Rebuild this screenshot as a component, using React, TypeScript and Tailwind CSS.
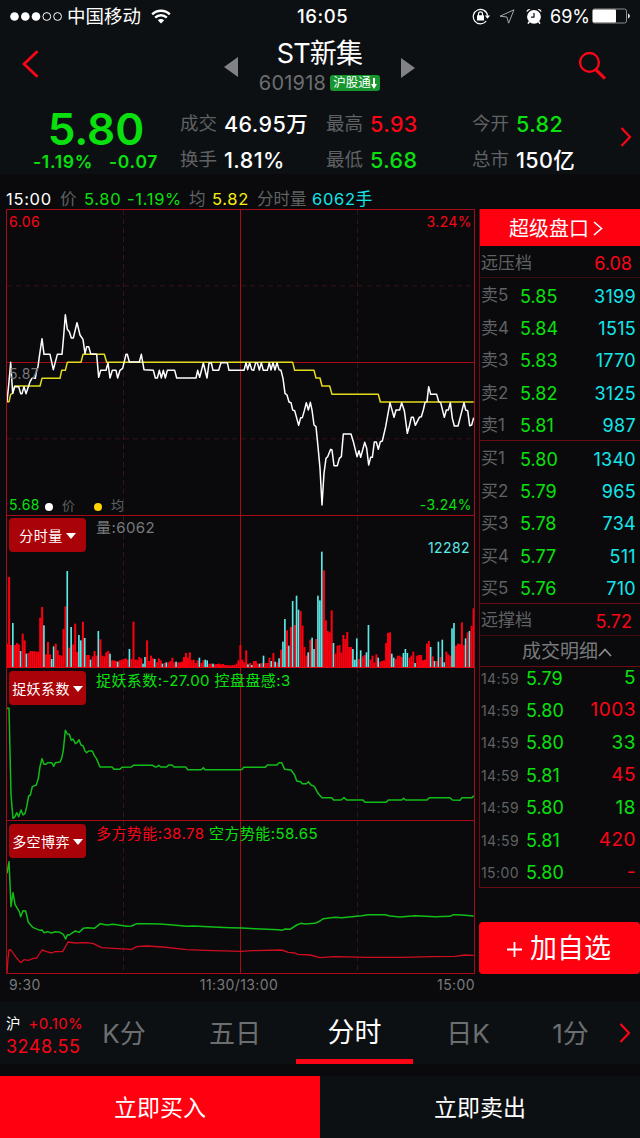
import React from 'react';

interface Stat {
  label: string;
  value: string;
  color: string;
}

interface Level {
  label: string;
  price: string;
  volume: string;
}

interface Trade {
  time: string;
  price: string;
  volume: string;
  color: string;
}

const GREEN = 'text-[#0be00f]';
const RED = 'text-[#fb0516]';

const stats: Stat[] = [
  { label: '成交', value: '46.95万', color: 'text-white' },
  { label: '最高', value: '5.93', color: RED },
  { label: '今开', value: '5.82', color: GREEN },
  { label: '换手', value: '1.81%', color: 'text-white' },
  { label: '最低', value: '5.68', color: GREEN },
  { label: '总市', value: '150亿', color: 'text-white' },
];

const sells: Level[] = [
  { label: '卖5', price: '5.85', volume: '3199' },
  { label: '卖4', price: '5.84', volume: '1515' },
  { label: '卖3', price: '5.83', volume: '1770' },
  { label: '卖2', price: '5.82', volume: '3125' },
  { label: '卖1', price: '5.81', volume: '987' },
];

const buys: Level[] = [
  { label: '买1', price: '5.80', volume: '1340' },
  { label: '买2', price: '5.79', volume: '965' },
  { label: '买3', price: '5.78', volume: '734' },
  { label: '买4', price: '5.77', volume: '511' },
  { label: '买5', price: '5.76', volume: '710' },
];

const trades: Trade[] = [
  { time: '14:59', price: '5.79', volume: '5', color: GREEN },
  { time: '14:59', price: '5.80', volume: '1003', color: RED },
  { time: '14:59', price: '5.80', volume: '33', color: GREEN },
  { time: '14:59', price: '5.81', volume: '45', color: RED },
  { time: '14:59', price: '5.80', volume: '18', color: GREEN },
  { time: '14:59', price: '5.81', volume: '420', color: RED },
  { time: '15:00', price: '5.80', volume: '-', color: RED },
];

// One bar per minute. Negative values are drawn in cyan, positive in red.
const volumes = [
  70, 270, 66, -132, 66, 72, 68, -48, 100, 80, -40, 42, 48, 48, 47, 46, 46, 148, 180, -125,
  38, 75, 38, -24, -62, 70, 50, 36, 34, 114, 182, -288, 58, -120, 68, 130, 45, -96, -80, 136,
  -87, 36, 36, -22, 32, 48, 34, -108, 83, 34, 32, 44, 48, -40, 20, 20, 18, -16, 20, 22,
  24, 26, 22, -54, 24, 136, 22, 22, 30, 26, -10, -30, 80, 18, 34, 26, -24, 14, 26, 20,
  -10, 12, -14, 14, 18, 28, 14, -16, 14, 14, 16, 30, 42, 28, 44, 20, 22, 12, 20, -28,
  12, 20, -22, -20, 10, 10, -10, 8, 9, 10, 8, 9, 6, 6, 5, 5, 6, 6, 10, 20,
  66, 22, 14, 50, -8, 12, -6, 18, 18, 10, -10, 12, -34, 12, 12, 28, -18, 42, -16, 14,
  -26, 52, -76, -144, 110, -64, 120, -198, 126, -214, -172, 168, 124, 60, 34, -44, 82, -88, -54, 84,
  -214, -200, -346, 290, 140, 108, 104, 170, -72, 40, 64, 66, 44, 96, 84, 105, 60, 60, -54, -22,
  -86, 24, -50, 32, 36, -44, -126, 22, 34, 14, 38, -28, 16, 18, 20, 72, 102, 104, -40, -28,
  24, 34, 34, 30, -42, -54, -42, 28, 34, 46, -12, 34, 36, 36, 20, 22, 70, 78, -60, 32,
  -18, 18, -76, 30, -82, -14, 46, 38, 34, -116, -132, 64, 70, 68, 134, 66, -86, 104, -108, 124,
  176,
];

// Each series is split in two: morning and afternoon session
const price = [
  '21,665 27,605 32,547 38,640 44,620 56,620 62,641 66,641 72,620 78,641 90,605 96,595 106,595 110,571 114,560 118,530 126,476 132,523 150,523 160,569 172,523 186,523 190,480 196,404 202,448 208,455 214,474 220,474 231,428 240,465 249,478 255,521 260,500 266,500 272,521 290,523 296,592 302,571 318,571 324,549 330,594 337,571 348,571 353,594 360,571 368,565 378,523 382,523 388,546 418,546 424,523 432,569 460,571 466,594 472,594 478,571 484,594 490,571 496,594 502,571 524,571 530,594 588,594 593,571 599,592 610,549 621,594 627,549 634,549 639,571 656,571 663,548 682,548 687,571 729,571',
  '24,571 27,571 33,548 38,569 44,548 50,569 56,571 62,548 67,548 73,570 79,548 85,571 97,571 103,548 108,570 114,548 120,570 126,548 132,569 138,571 144,595 150,640 156,645 162,666 168,668 173,690 179,692 191,736 197,713 202,713 208,692 214,668 220,690 226,667 231,690 237,735 243,740 249,800 255,865 261,975 267,880 273,835 278,830 287,808 291,810 297,857 307,857 313,835 319,830 325,762 348,762 355,785 366,830 372,812 377,832 389,787 395,805 401,855 407,832 412,832 418,786 424,786 430,808 436,785 442,783 452,740 465,668 477,712 483,690 494,690 500,668 508,692 517,760 523,738 529,712 535,712 541,736 553,712 559,710 565,690 570,668 576,665 581,620 587,643 605,643 611,665 617,668 628,712 634,690 640,690 646,668 652,715 658,738 669,738 675,715 687,668 692,690 698,692 704,737 710,735 716,713',
];

const average = [
  '21,665 27,665 32,643 38,640 44,618 120,618 126,595 180,595 185,571 196,571 202,547 243,547 249,523 313,523 320,547 729,547',
  '24,547 173,547 179,571 237,571 243,594 255,594 261,618 284,618 291,643 430,643 436,666 716,666',
];

const factor = [
  '21,130 27,130 33,390 39,460 45,455 50,443 56,455 63,435 69,450 75,445 80,425 86,393 91,390 97,365 109,360 115,340 120,305 126,281 132,298 138,298 143,293 155,293 161,304 166,293 180,291 185,280 190,255 196,196 202,207 208,208 214,226 219,222 226,236 231,233 237,224 243,240 249,242 255,258 260,263 266,258 277,258 283,272 289,280 300,306 336,306 342,313 360,313 366,307 394,306 400,301 458,301 464,305 470,306 476,301 482,306 500,306 506,300 516,300 522,306 557,306 563,314 604,314 610,308 615,314 725,314',
  '20,314 26,307 91,307 97,300 126,300 132,293 140,293 149,313 168,315 179,330 185,348 197,350 202,356 214,356 220,350 228,360 238,364 249,385 261,398 290,398 296,405 318,405 327,398 335,405 384,405 390,412 453,412 460,405 500,405 506,400 512,405 576,405 583,398 645,398 652,405 675,406 681,398 711,398 716,392',
];

const bears = [
  '21,625 27,590 33,725 39,683 45,718 52,730 58,740 62,755 69,737 77,738 85,772 98,787 120,796 126,795 132,803 143,800 154,804 166,800 180,802 190,808 197,822 202,809 208,810 219,802 226,798 237,802 250,790 262,788 283,790 301,776 320,780 340,778 380,784 395,783 410,776 440,776 480,777 520,780 560,784 580,783 640,786 690,788 726,789',
  '20,789 60,791 130,794 140,796 150,792 165,793 185,780 198,775 210,777 240,775 255,768 265,761 300,757 320,758 380,752 400,749 450,749 465,753 495,756 540,752 600,755 645,754 655,749 680,750 716,753',
];

const bulls = [
  '21,924 24,880 27,854 33,855 45,873 62,893 72,884 85,886 98,881 110,879 126,855 140,860 155,864 165,860 188,860 204,831 225,834 260,833 280,836 305,848 340,850 395,853 410,845 440,843 490,846 560,854 640,857 726,859',
  '20,859 50,857 140,855 160,862 180,864 188,868 225,870 255,878 300,875 400,877 500,877 590,875 660,874 690,870 716,871',
];

const Series: React.FC<{ data: string[]; color: string; width?: number }> = ({ data, color, width = 4.5 }) => (
  <g fill="none" stroke={color} strokeWidth={width} strokeLinejoin="round">
    <polyline points={data[0]} />
    <polyline points={data[1]} transform="translate(705 0)" />
  </g>
);

const Guides: React.FC<{ top: number; bottom: number }> = ({ top, bottom }) => (
  <g strokeWidth="3">
    <g stroke="#3a1318" strokeDasharray="15 12">
      <path d={`M370.5 ${top}V${bottom}`} />
      <path d={`M1072.5 ${top}V${bottom}`} />
    </g>
    <path d={`M721.5 ${top}V${bottom}`} stroke="#a80a18" />
  </g>
);

const Chevron: React.FC<{ className: string }> = ({ className }) => (
  <svg className={className} viewBox="0 0 12 20" fill="none" stroke="#fb0516" strokeWidth="2.2">
    <path d="M1.5 1L10 10L1.5 19" />
  </svg>
);

const IndicatorButton: React.FC<{ label: string }> = ({ label }) => (
  <button className="flex h-[34px] w-[77px] shrink-0 items-center justify-center gap-[3px] rounded bg-[#a90208] pt-px text-[14px] text-white">
    {label}
    <svg className="h-[6px] w-[10px]" viewBox="0 0 10 6" fill="#fff">
      <path d="M0 0H10L5 6Z" />
    </svg>
  </button>
);

const StatusBar: React.FC = () => (
  <div className="flex h-8 items-center px-[10px] text-[18.5px] text-white">
    <div className="flex w-[287px] items-center">
      <svg className="h-[9px] w-[53px]" viewBox="0 0 53 9">
        <g fill="#fff">
          <circle cx="4.5" cy="4.5" r="4.3" />
          <circle cx="15.3" cy="4.5" r="4.3" />
          <circle cx="26" cy="4.5" r="4.3" />
        </g>
        <g fill="none" stroke="#fff">
          <circle cx="36.8" cy="4.5" r="3.9" />
          <circle cx="47.6" cy="4.5" r="3.9" />
        </g>
      </svg>
      <span className="ml-1 pt-px">中国移动</span>
      <svg className="ml-[10px] h-[15px] w-[20px]" viewBox="0 0 20 15" fill="none" stroke="#fff" strokeWidth="2.4">
        <path d="M1.2 5.4A12.5 12.5 0 0 1 18.8 5.4" />
        <path d="M4.2 8.6A8.2 8.2 0 0 1 15.8 8.6" />
        <path d="M10 14.5L6.8 11.2A4.6 4.6 0 0 1 13.2 11.2Z" fill="#fff" stroke="none" />
      </svg>
    </div>
    <span className="w-[175px] pt-px font-medium tracking-[0.6px]">16:05</span>
    <svg className="h-[17px] w-[18px]" viewBox="0 0 18 17" fill="none" stroke="#fff" strokeWidth="1.2">
      <path d="M14.2 13A7.2 7.2 0 1 1 15.6 7.6" />
      <path d="M12.9 7.4H18L15.5 10.7Z" fill="#fff" stroke="none" />
      <rect x="5" y="7.2" width="7" height="5.2" rx="0.5" fill="#fff" stroke="none" />
      <path d="M6.5 8V5.8A2 2 0 0 1 10.5 5.8V8" />
    </svg>
    <svg className="ml-[9px] h-[15px] w-[16px]" viewBox="0 0 16 15" fill="none" stroke="#a5a7a9" strokeWidth="1">
      <path d="M15 0.8L1 7.2L7.9 8L9.6 14.2Z" />
    </svg>
    <svg className="ml-[11px] h-[17px] w-[16px]" viewBox="0 0 16 17" fill="#fff">
      <circle cx="8" cy="8.8" r="6.9" />
      <path d="M0.6 4.2A3 3 0 0 1 4.6 1.1ZM15.4 4.2A3 3 0 0 0 11.4 1.1Z" />
      <path d="M3.4 13.6L2 15.6M12.6 13.6L14 15.6" stroke="#fff" strokeWidth="1.6" />
      <path d="M8 5V9.2H5" fill="none" stroke="#0d1013" strokeWidth="1.2" />
    </svg>
    <span className="ml-2 w-[42px] pt-px text-[18px]">69%</span>
    <svg className="h-[16px] w-[38px]" viewBox="0 0 38 16">
      <rect x="0.5" y="1" width="34" height="14" rx="2" fill="none" stroke="#8d8f91" />
      <rect x="1" y="1.5" width="23" height="13" rx="1" fill="#fff" />
      <path d="M36 5.5C38.4 6.5 38.4 9.5 36 10.5Z" fill="#e5e6e7" />
    </svg>
  </div>
);

const TitleBar: React.FC = () => (
  <div className="flex h-[68px] items-start">
    <svg className="ml-[22px] mt-[18px] h-[28px] w-[17px]" viewBox="0 0 17 28" fill="none" stroke="#fb0516" strokeWidth="2.8">
      <path d="M15.5 1.2L2 14L15.5 26.8" />
    </svg>
    <svg className="ml-[185px] mt-[25px] h-[20px] w-[14px]" viewBox="0 0 14 20" fill="#808285">
      <path d="M14 0V20L0 10Z" />
    </svg>
    <div className="flex w-[163px] flex-col items-center">
      <h1 className="mt-[7px] h-[30px] text-[27px] leading-[30px] tracking-[-0.8px] text-white">ST新集</h1>
      <div className="mt-[4px] flex h-5 items-center gap-[4px]">
        <span className="text-[20px] leading-5 tracking-[0.2px] text-[#6c6e70]">601918</span>
        <span className="flex h-4 w-[50px] items-center justify-center rounded-[3px] bg-[#17962f] text-[12.5px] text-white">
          沪股通
          <svg className="h-[11px] w-[6px]" viewBox="0 0 6 11" fill="#fff">
            <path d="M2 0H4V6H6L3 11L0 6H2Z" />
          </svg>
        </span>
      </div>
    </div>
    <svg className="mt-[26px] h-[20px] w-[14px]" viewBox="0 0 14 20" fill="#808285">
      <path d="M0 0V20L14 10Z" />
    </svg>
    <svg className="ml-[164px] mt-[19px] h-[29px] w-[28px]" viewBox="0 0 28 29" fill="none" stroke="#fb0516" strokeWidth="2.3">
      <circle cx="10.5" cy="11.4" r="9.4" />
      <path d="M16.8 18.6L26 27.6" strokeWidth="3.2" />
    </svg>
  </div>
);

const Quote: React.FC = () => (
  <div className="flex h-[74px]">
    <div className={`w-[180px] ${GREEN}`}>
      <div className="mt-[9px] h-[40px] pl-[12px] text-center text-[44px] font-semibold leading-[40px]">5.80</div>
      <div className="mt-[3px] flex h-5 items-center gap-[14px] pl-[33px] text-[17.5px] font-semibold leading-5 tracking-[0.7px]">
        <span className="w-[62px]">-1.19%</span>
        <span>-0.07</span>
      </div>
    </div>
    <div className="grid w-[440px] grid-cols-[146px_146px_148px] grid-rows-[36px_36px] pt-[6px]">
      {stats.map(stat => (
        <div key={stat.label} className="flex items-center gap-[7px] whitespace-nowrap">
          <span className="text-[18.5px] text-[#5f6163]">{stat.label}</span>
          <span className={`text-[21.5px] font-medium tracking-[0.4px] ${stat.color}`}>{stat.value}</span>
        </div>
      ))}
    </div>
    <Chevron className="mt-[27px] h-[20px] w-[12px]" />
  </div>
);

const ChartHeader: React.FC = () => (
  <div className="flex h-[35px] items-end whitespace-nowrap pl-[6px] text-[16.5px] leading-[20px] tracking-[0.7px]">
    <span className="w-[54px] text-white">15:00</span>
    <span className="w-[24px] text-[#5f6163]">价</span>
    <span className={`w-[43px] ${GREEN}`}>5.80</span>
    <span className={`w-[62px] ${GREEN}`}>-1.19%</span>
    <span className="w-[23px] text-[#5f6163]">均</span>
    <span className="w-[45px] text-[#f5ee12]">5.82</span>
    <span className="w-[55px] tracking-normal text-[#5f6163]">分时量</span>
    <span className="text-[#14e6ea]">6062手</span>
  </div>
);

const Charts: React.FC = () => (
  <div className="w-[469px] border-x border-b border-[#a80a18] text-[15px] leading-[18px] tracking-[0.42px]">
    <section className="relative flex h-[306px] flex-col justify-between border-t border-[#a80a18]">
      <svg className="absolute inset-0 h-full w-full" viewBox="21 90 1401 915">
        <Guides top={90} bottom={1005} />
        <g strokeWidth="3">
          <path d="M21 317.5H1422M21 776.5H1422" stroke="#3a1318" strokeDasharray="15 12" />
          <path d="M21 547.5H1422" stroke="#a80a18" />
        </g>
        <Series data={average} color="#e3dc1c" />
        <Series data={price} color="#ffffff" />
      </svg>
      <div className="relative flex justify-between px-[2px] pt-[3px] text-[14px]">
        <span className={RED}>6.06</span>
        <span className={RED}>3.24%</span>
      </div>
      <span className="relative mt-[20px] pl-[2px] text-[14px] text-[#77797b]">5.87</span>
      <div className="relative flex items-center px-[2px] pb-px text-[14px]">
        <span className={`w-[36px] ${GREEN}`}>5.68</span>
        <span className="mt-[3px] h-2 w-2 rounded-full bg-white" />
        <span className="ml-[9px] w-[32px] text-[13px] text-[#5f6163]">价</span>
        <span className="mt-[3px] h-2 w-2 rounded-full bg-[#ffd400]" />
        <span className="ml-[9px] text-[13px] text-[#5f6163]">均</span>
        <span className={`ml-auto ${GREEN}`}>-3.24%</span>
      </div>
    </section>

    <section className="relative h-[152px] border-t border-[#a80a18]">
      <svg className="absolute inset-0 h-full w-full" viewBox="21 3 1401 453">
        <Guides top={3} bottom={456} />
        {volumes.map((v, i) => (
          <rect
            key={i}
            x={18.5 + i * 5.83}
            y={456 - Math.abs(v)}
            width={v < 0 ? 5 : 6}
            height={Math.abs(v)}
            fill={v < 0 ? '#5ce8e6' : '#fb0010'}
          />
        ))}
      </svg>
      <div className="relative flex gap-[10px] pl-[2px] pt-[2px]">
        <IndicatorButton label="分时量" />
        <span className="pt-px text-[#77797b]">量:6062</span>
      </div>
      <div className="relative -mt-[13px] pr-1 text-right text-[14px] text-[#5ce8e6]">12282</div>
    </section>

    <section className="relative h-[153px] border-t border-[#e80414]">
      <svg className="absolute inset-0 h-full w-full" viewBox="21 9 1401 456">
        <Guides top={9} bottom={465} />
        <Series data={factor} color="#12bd18" />
      </svg>
      <div className="relative flex gap-[10px] pl-[2px] pt-[3px]">
        <IndicatorButton label="捉妖系数" />
        <span className={`pt-px ${GREEN}`}>捉妖系数:-27.00 控盘盘感:3</span>
      </div>
    </section>

    <section className="relative h-[153px] border-t border-[#a80a18]">
      <svg className="absolute inset-0 h-full w-full" viewBox="21 468 1401 456">
        <Guides top={468} bottom={924} />
        <Series data={bulls} color="#cf0c20" width={4} />
        <Series data={bears} color="#12bd18" />
      </svg>
      <div className="relative flex gap-[10px] pl-[2px] pt-[3px]">
        <IndicatorButton label="多空博弈" />
        <span className={`pt-px ${GREEN}`}>
          <span className={RED}>多方势能:38.78</span> 空方势能:58.65
        </span>
      </div>
    </section>
  </div>
);

const LevelRows: React.FC<{ rows: Level[] }> = ({ rows }) => (
  <div className="h-[163px] border-b border-[#6b0b14] pt-[2px]">
    {rows.map(row => (
      <div key={row.label} className="flex h-[32.4px] items-center pl-[1px] pr-[4px] text-[18px]">
        <span className="w-[39px] text-[17px] text-[#5f6163]">{row.label}</span>
        <span className={GREEN}>{row.price}</span>
        <span className="ml-auto tracking-[0.3px] text-[#14e6ea]">{row.volume}</span>
      </div>
    ))}
  </div>
);

const OrderBook: React.FC = () => (
  <aside className="ml-1 flex flex-1 flex-col">
    <div className="flex h-[679px] flex-col overflow-hidden border-b border-l border-[#6b0b14]">
      <div className="flex h-[37px] shrink-0 items-center justify-center gap-1 bg-[#ff0010] pr-[8px] pt-[2px] text-[20px] text-white">
        超级盘口
        <svg className="h-[15px] w-[10px]" viewBox="0 0 10 15" fill="none" stroke="#fff" strokeWidth="1.6">
          <path d="M1 1L8.5 7.5L1 14" />
        </svg>
      </div>
      <div className="flex h-[32px] shrink-0 items-center justify-between border-b border-[#3a0b10] pl-[1px] pr-2 pt-[4px]">
        <span className="text-[17px] text-[#5f6163]">远压档</span>
        <span className={`text-[18px] ${RED}`}>6.08</span>
      </div>
      <LevelRows rows={sells} />
      <LevelRows rows={buys} />
      <div className="flex h-[32px] shrink-0 items-center justify-between border-b border-[#3a0b10] pl-[1px] pr-2 pt-[3px]">
        <span className="text-[17px] text-[#5f6163]">远撑档</span>
        <span className={`text-[18px] ${RED}`}>5.72</span>
      </div>
      <div className="flex h-[31px] shrink-0 items-center justify-center border-b border-[#6b0b14] pl-[14px] pt-[3px] text-[19px] text-[#77797b]">
        成交明细
        <svg className="h-[9px] w-[14px]" viewBox="0 0 14 9" fill="none" stroke="#8d8f91" strokeWidth="1.7">
          <path d="M1 8L7 1.5L13 8" />
        </svg>
      </div>
      <div className="-mt-[5px]">
        {trades.map((trade, i) => (
          <div key={i} className="flex h-[32.4px] items-center pl-[1px] pr-[4px] text-[18px]">
            <span className="w-[45px] text-[14px] tracking-[0.4px] text-[#5f6163]">{trade.time}</span>
            <span className={GREEN}>{trade.price}</span>
            <span className={`ml-auto text-[19px] tracking-[0.5px] ${trade.color}`}>{trade.volume}</span>
          </div>
        ))}
      </div>
    </div>
    <button className="mt-auto flex h-[52px] items-center justify-center gap-2 rounded bg-[#ff0010] pr-[1px] pt-[2px] text-[27px] text-white">
      <svg className="h-[15px] w-[15px]" viewBox="0 0 15 15" stroke="#fff" strokeWidth="1.8">
        <path d="M7.5 0V15M0 7.5H15" />
      </svg>
      加自选
    </button>
  </aside>
);

const PeriodTabs: React.FC = () => (
  <nav className="flex h-[62px] bg-[#0d1013] text-[26px] text-[#6c6e70]">
    <div className="w-[88px] whitespace-nowrap pl-[6px] pt-[12px]">
      <div className="flex h-5 items-center gap-2">
        <span className="text-[14.5px] text-white">沪</span>
        <span className={`text-[15px] tracking-[0.4px] ${RED}`}>+0.10%</span>
      </div>
      <div className={`h-[24px] text-[18px] leading-[26px] tracking-[0.5px] ${RED}`}>3248.55</div>
    </div>
    <div className="flex w-[72px] items-center justify-center">K分</div>
    <div className="flex w-[136px] items-center justify-center pl-[14px]">五日</div>
    <div className="flex w-[117px] items-center justify-center border-b-[5px] border-[#fb0516] pt-[5px] text-[27px] text-white">分时</div>
    <div className="flex w-[110px] items-center justify-center">日K</div>
    <div className="flex w-[95px] items-center justify-center">1分</div>
    <Chevron className="ml-[1px] mt-[21px] h-[20px] w-[12px]" />
  </nav>
);

const App: React.FC = () => {
  return (
    <div className="flex h-[1138px] w-[640px] flex-col overflow-hidden bg-[#0a0a0c] font-['Inter','Noto_Sans_CJK_SC',sans-serif]">
      <header className="h-[174px] shrink-0 bg-[#0d1013]">
        <StatusBar />
        <TitleBar />
        <Quote />
      </header>
      <ChartHeader />
      <main className="flex h-[765px] pl-[6px]">
        <Charts />
        <OrderBook />
      </main>
      <div className="flex h-[28px] w-[475px] justify-between pl-[9px] pt-[2px] text-[14px] leading-[18px] tracking-[0.4px] text-[#77797b]">
        <span className="w-[32px]">9:30</span>
        <span>11:30/13:00</span>
        <span>15:00</span>
      </div>
      <PeriodTabs />
      <div className="mt-auto flex h-[62px] text-[23px] text-white">
        <button className="flex-1 bg-[#ff0010] pt-[3px]">立即买入</button>
        <button className="flex-1 bg-[#0d1013] pt-[3px]">立即卖出</button>
      </div>
    </div>
  );
};

export default App;
